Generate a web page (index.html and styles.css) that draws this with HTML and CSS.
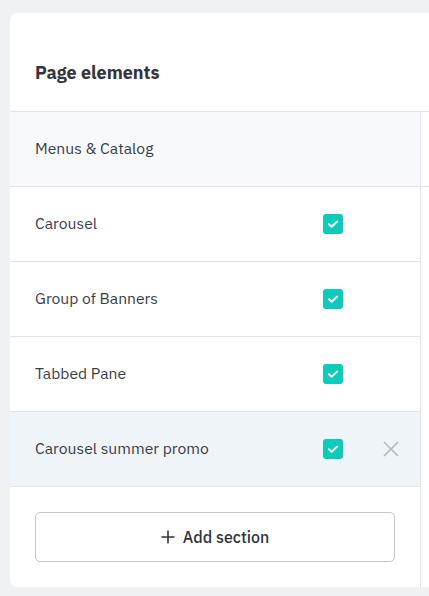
FILE: index.html
```html
<!DOCTYPE html>
<html>
<head>
<meta charset="utf-8">
<link rel="stylesheet" href="styles.css">
</head>
<body>
<div class="card">
  <div class="header"><h2 class="title">Page elements</h2></div>
  <div class="body">
    <div class="list">
      <div class="row row-muted"><span class="label">Menus &amp; Catalog</span></div>
      <div class="row"><span class="label">Carousel</span><span class="check"><svg viewBox="0 0 20 20" width="20" height="20"><path d="M6 10.2l2.7 2.6L14 7.6" fill="none" stroke="#fff" stroke-width="2" stroke-linecap="round" stroke-linejoin="round"/></svg></span><span class="slot"></span></div>
      <div class="row"><span class="label">Group of Banners</span><span class="check"><svg viewBox="0 0 20 20" width="20" height="20"><path d="M6 10.2l2.7 2.6L14 7.6" fill="none" stroke="#fff" stroke-width="2" stroke-linecap="round" stroke-linejoin="round"/></svg></span><span class="slot"></span></div>
      <div class="row"><span class="label">Tabbed Pane</span><span class="check"><svg viewBox="0 0 20 20" width="20" height="20"><path d="M6 10.2l2.7 2.6L14 7.6" fill="none" stroke="#fff" stroke-width="2" stroke-linecap="round" stroke-linejoin="round"/></svg></span><span class="slot"></span></div>
      <div class="row row-active"><span class="label">Carousel summer promo</span><span class="check"><svg viewBox="0 0 20 20" width="20" height="20"><path d="M6 10.2l2.7 2.6L14 7.6" fill="none" stroke="#fff" stroke-width="2" stroke-linecap="round" stroke-linejoin="round"/></svg></span><span class="slot"><svg viewBox="0 0 16 16" width="16" height="16"><path d="M1 1L15 15M15 1L1 15" stroke="#b4b8bf" stroke-width="1.6"/></svg></span></div>
      <div class="footer">
        <button class="add-btn"><svg viewBox="0 0 16 16" width="14" height="14"><path d="M8 0.5v15M0.5 8h15" stroke="#333" stroke-width="1.8"/></svg><span>Add section</span></button>
      </div>
    </div>
    <div class="side">
      <div class="side-row"></div>
    </div>
  </div>
</div>
</body>
</html>
```
FILE: styles.css
```css
html, body {
  margin: 0;
  padding: 0;
  background: #f0f1f3;
  font-family: "IBM Plex Sans", "Noto Sans", sans-serif;
  color: #3a3d4a;
}
body {
  padding: 13px 0 0 10px;
  overflow: hidden;
  height: 596px;
  box-sizing: border-box;
}
.card {
  background: #fff;
  border-radius: 7px 0 0 7px;
  width: 440px;
  height: 574px;
  display: flex;
  flex-direction: column;
}
.header {
  height: 99px;
  border-bottom: 1px solid #e2e3e8;
  display: flex;
  align-items: center;
  padding: 0 25px;
  box-sizing: border-box;
  flex-shrink: 0;
}
.title {
  margin: 20px 0 0;
  font-size: 18px;
  font-weight: 700;
  color: #33343c;
}
.body {
  display: flex;
  flex: 1;
}
.list {
  width: 410px;
  border-right: 1px solid #e2e3e8;
  display: flex;
  flex-direction: column;
}
.row {
  height: 75px;
  border-bottom: 1px solid #e2e3e8;
  display: flex;
  align-items: center;
  padding: 0 21px 0 25px;
  box-sizing: border-box;
  font-size: 15.7px;
}
.row-muted { background: #f8f9fb; }
.row-active { background: #eff4f9; }
.label { flex: 1; margin-top: -2px; }
.check {
  width: 20px;
  height: 20px;
  background: #0dcabb;
  border-radius: 3px;
  display: flex;
}
.slot {
  width: 56px;
  display: flex;
  justify-content: flex-end;
}
.footer {
  padding: 25px 25px 0;
}
.add-btn {
  width: 360px;
  height: 50px;
  border: 1px solid #c4c5d6;
  border-radius: 5px;
  background: #fff;
  display: flex;
  align-items: center;
  justify-content: center;
  gap: 8px;
  padding: 0;
  font-family: inherit;
  font-size: 16px;
  font-weight: 500;
  color: #33343c;
}
.side { flex: 1; }
.side-row {
  height: 74px;
  border-bottom: 1px solid #e2e3e8;
}
```
